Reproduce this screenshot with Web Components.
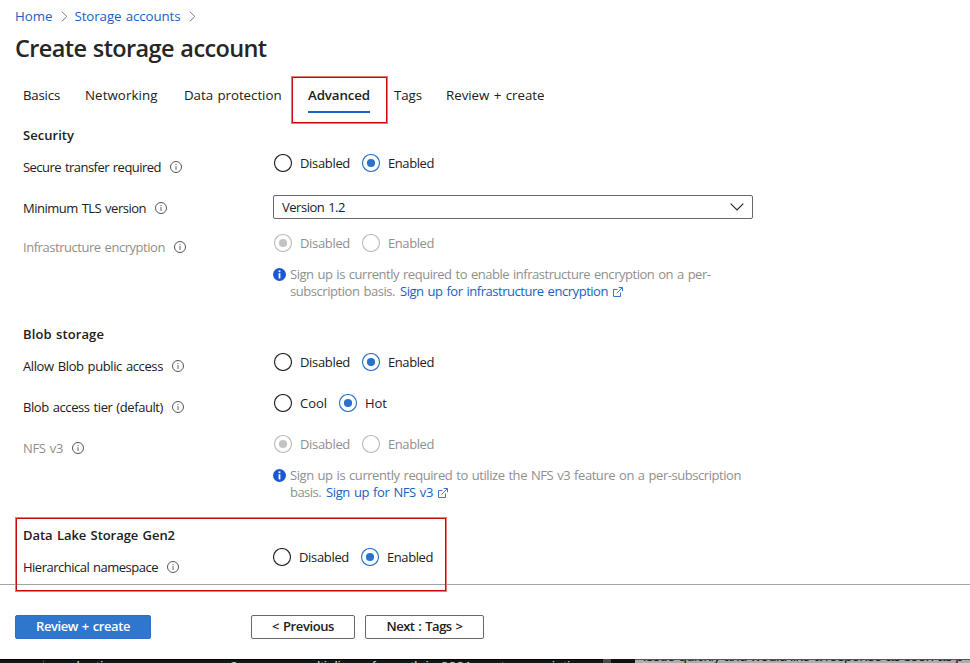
<!DOCTYPE html>
<html lang="en">
<head>
<meta charset="utf-8">
<title>Create storage account</title>
<style>
html,body{margin:0;padding:0;background:#fff;overflow:hidden}
body{width:970px;height:663px;font-family:"Open Sans","Noto Sans",sans-serif;font-size:13px;word-spacing:1px;color:#202020}
</style>
</head>
<body>
<storage-page></storage-page>
<script>
const define=(name,html,init)=>customElements.define(name,class extends HTMLElement{
  connectedCallback(){
    if(this.shadowRoot)return;
    const t=document.createElement('template');
    t.innerHTML=typeof html==='function'?html(this):html;
    this.attachShadow({mode:'open'}).append(t.content.cloneNode(true));
    if(init)init(this);
  }
});

/* A single line of text, tracked to occupy the width given in "w". */
define('fit-text','<style>:host{display:inline-block;white-space:pre;flex:none}span{display:inline-block}</style><span></span>',el=>{
  const s=el.shadowRoot.querySelector('span');
  s.textContent=el.getAttribute('t');
  const w=+el.getAttribute('w');
  const n=s.textContent.length;
  s.style.letterSpacing=((w-s.getBoundingClientRect().width)/n)+'px';
  el.style.width=w+'px';
});

define('info-icon',`<style>:host{display:block;width:12px;height:12px;flex:none}svg{display:block}</style>
<svg width="12" height="12" viewBox="0 0 12 12"><circle cx="6" cy="6" r="5.5" fill="none" stroke="#555" stroke-width="1"/><rect x="5.5" y="5" width="1" height="4" fill="#666"/><rect x="5.5" y="3" width="1" height="1.1" fill="#666"/></svg>`);

define('info-badge',`<style>:host{display:block;width:13px;height:13px;flex:none}svg{display:block}</style>
<svg width="13" height="13" viewBox="0 0 13 13"><circle cx="6.5" cy="6.5" r="6.5" fill="#1f57d2"/><rect x="5.6" y="5.2" width="1.8" height="5.2" fill="#fff"/><rect x="5.6" y="2.4" width="1.8" height="1.7" fill="#fff"/></svg>`);

define('external-icon',`<style>:host{display:block;width:10px;height:10px;flex:none}svg{display:block}</style>
<svg width="10" height="10" viewBox="0 0 10 10" fill="none" stroke="#3a78d0" stroke-width="1"><path d="M4.5 2.5H.5v7h7V5.5M5.7.5h3.8v3.8M9.5.5L3.7 6.3"/></svg>`);

define('crumb-chevron',`<style>:host{display:block;width:7px;height:11px;flex:none}svg{display:block}</style>
<svg width="7" height="11" viewBox="0 0 7 11"><path d="M.8.6L5.8 5.5.8 10.4" fill="none" stroke="#777" stroke-width="1"/></svg>`);

define('bread-crumbs',`<style>:host{display:flex;align-items:center;height:32px;padding-left:15px;box-sizing:border-box;color:#1562c5;line-height:18px;font-size:13.3px}
.a{margin:0 6.5px 0 8.5px}.b{margin-left:8px}</style>
<fit-text t="Home" w="37.5"></fit-text><crumb-chevron class="a"></crumb-chevron><fit-text t="Storage accounts" w="106"></fit-text><crumb-chevron class="b"></crumb-chevron>`);

define('tab-item',el=>`<style>:host{display:block;height:34px;line-height:32px;box-sizing:border-box}
:host([active]){font-weight:600;border-bottom:2px solid #1b62c4}</style><fit-text t="${el.getAttribute('t')}" w="${el.getAttribute('w')}"></fit-text>`);

define('tab-bar',`<style>:host{display:flex;height:60px;padding:13px 0 0 23px;box-sizing:border-box;align-items:flex-start;font-size:13.3px;position:relative}
.mark{position:absolute;left:291px;top:10px}</style>
<slot></slot><mark-box class="mark" style="width:97px;height:48px"></mark-box>`);

define('mark-box','<style>:host{display:block;box-sizing:border-box;border:1px solid #e27a7a;box-shadow:inset 0 0 0 1px #c60c0c;pointer-events:none}</style>');

define('section-title',el=>`<style>:host{display:block;height:18px;line-height:18px;padding-left:23px;font-weight:600}</style><fit-text t="${el.getAttribute('t')}" w="${el.getAttribute('w')}"></fit-text>`);

define('form-row',el=>`<style>:host{display:grid;grid-template-columns:250px 1fr;padding-left:23px;box-sizing:border-box;line-height:18px}
.l{display:flex;gap:9px;padding-top:14px;align-items:center;height:18px}
.l fit-text{color:${el.hasAttribute('dim')?'#8f8f8d':'#202020'}}
.c{padding-top:10px}:host([raised]) .c{padding-top:4px;margin-left:-1px}</style>
<div class="l"><fit-text t="${el.getAttribute('t')}" w="${el.getAttribute('w')}"></fit-text><info-icon></info-icon></div><div class="c"><slot></slot></div>`);

define('radio-option',el=>`<style>:host{display:flex;align-items:center;gap:8px;height:18px;color:#202020}
:host([off]){color:#8f8f8d}svg{display:block;flex:none}
circle{fill:none;stroke:#222}.d{display:none;stroke:none}
:host([on]) circle{stroke:#2a72cb}:host([on]) .d{display:block;fill:#2a72cb;stroke:none}
:host([off]) circle{stroke:#bdbdbb}:host([off][on]) .d{fill:#c3c3c1;stroke:none}</style>
<svg width="18" height="18" viewBox="0 0 18 18"><circle cx="9" cy="9" r="8.5" stroke-width="1.1"/><circle class="d" cx="9" cy="9" r="4.1"/></svg><fit-text t="${el.getAttribute('t')}" w="${el.getAttribute('w')}"></fit-text>`);

define('radio-group','<style>:host{display:flex;gap:12px;padding-left:1px}</style><slot></slot>');

define('select-box',`<style>:host{display:flex;width:480px;height:24px;box-sizing:border-box;border:1px solid #6a6866;border-radius:2px;align-items:center;justify-content:space-between;padding:0 8px}svg{display:block}</style>
<fit-text t="Version 1.2" w="63"></fit-text><svg width="14" height="8" viewBox="0 0 14 8"><path d="M.7.7L7 7 13.3.7" fill="none" stroke="#222" stroke-width="1.1"/></svg>`);

define('sign-up-note',`<style>:host{display:flex;gap:4px;padding-top:14px;color:#8f8f8d;line-height:17px}
info-badge{margin-top:2px}::slotted(div){display:flex;align-items:center;height:17px}</style>
<info-badge></info-badge><div><slot></slot></div>`);

define('note-link',el=>`<style>:host{display:flex;align-items:center;gap:5px;margin-left:5px;color:#1562c5}</style><fit-text t="${el.getAttribute('t')}" w="${el.getAttribute('w')}"></fit-text><external-icon></external-icon>`);

define('push-button',el=>`<style>:host{display:flex;align-items:center;justify-content:center;height:24px;box-sizing:border-box;border:1px solid #6a6866;border-radius:2px;font-weight:600;line-height:18px;padding-bottom:2px}
:host([primary]){background:#2e76ce;border-color:#2a70c8;color:#fff}</style><fit-text t="${el.getAttribute('t')}" w="${el.getAttribute('w')}"></fit-text>`);

define('action-bar','<style>:host{display:flex;height:75px;box-sizing:border-box;border-top:1px solid #a3a3a3;padding:30px 0 0 15px}</style><slot></slot>');

/* Sliver of the windows behind the form, cut off by the bottom edge. */
define('backdrop-strip',`<style>:host{display:flex;height:4px;overflow:hidden;font-family:"Liberation Sans",sans-serif;font-size:15px;line-height:18px;word-spacing:0;background:#161617}
.dark{width:603px;height:4px;box-sizing:border-box;border-top:1px solid #000;overflow:hidden;color:#c8c8c8;display:flex}
.rule{width:44px;border-right:1px solid #444;box-sizing:border-box;height:3px;margin-right:14px}
.dark fit-text{margin-top:-2px;height:18px}
.bar{width:8px;background:#4c4a4c}.gap{width:24px;background:#111}
.light{width:335px;background:#aeaaad;color:#1c1c1e;overflow:hidden;border-top:1px solid #555;height:4px;box-sizing:border-box;display:flex}
.light fit-text{margin:-13px 0 0 8px;height:18px}</style>
<div class="dark"><div class="rule"></div><fit-text t="reduction" w="62"></fit-text><fit-text t="are now" w="60" style="margin-left:22px"></fit-text><fit-text t="9" w="9" style="margin-left:28px"></fit-text><fit-text t="our" w="22" style="margin-left:16px"></fit-text><fit-text t="multipliers of growth in 2021" w="175" style="margin-left:20px"></fit-text><fit-text t="not conscriptions" w="110" style="margin-left:12px"></fit-text></div>
<div class="bar"></div><div class="gap"></div><div class="light"><fit-text t="issue quickly and would like a response as soon as p" w="320"></fit-text></div>`);

define('storage-page',`<style>
:host{display:flex;flex-direction:column;width:970px;height:663px;position:relative;overflow:hidden}
h1{margin:0;height:34px;line-height:32px;padding-left:15px;font-size:23.5px;font-weight:600;color:#262626}
.lake{position:absolute;left:15px;top:517px;width:432px;height:75px}
</style>
<bread-crumbs></bread-crumbs>
<h1><fit-text t="Create storage account" w="251.5"></fit-text></h1>
<tab-bar>
<tab-item t="Basics" w="37"></tab-item>
<tab-item t="Networking" w="72.5" style="margin-left:25px"></tab-item>
<tab-item t="Data protection" w="97.5" style="margin-left:26.5px"></tab-item>
<tab-item active t="Advanced" w="62" style="margin-left:26.5px"></tab-item>
<tab-item t="Tags" w="28" style="margin-left:24px"></tab-item>
<tab-item t="Review + create" w="98.5" style="margin-left:24px"></tab-item>
</tab-bar>
<section-title t="Security" w="51"></section-title>
<form-row t="Secure transfer required" w="138" style="height:41px"><radio-group><radio-option t="Disabled" w="50"></radio-option><radio-option on t="Enabled" w="46"></radio-option></radio-group></form-row>
<form-row t="Minimum TLS version" w="123" style="height:39px"><select-box></select-box></form-row>
<form-row dim t="Infrastructure encryption" w="142" style="height:101px"><radio-group><radio-option off on t="Disabled" w="50"></radio-option><radio-option off t="Enabled" w="46"></radio-option></radio-group>
<sign-up-note><div><fit-text t="Sign up is currently required to enable infrastructure encryption on a per-" w="420.5"></fit-text></div><div><fit-text t="subscription basis." w="105"></fit-text><note-link t="Sign up for infrastructure encryption" w="208"></note-link></div></sign-up-note></form-row>
<section-title t="Blob storage" w="81"></section-title>
<form-row t="Allow Blob public access" w="140" style="height:41px"><radio-group><radio-option t="Disabled" w="50"></radio-option><radio-option on t="Enabled" w="46"></radio-option></radio-group></form-row>
<form-row t="Blob access tier (default)" w="140" style="height:41px"><radio-group><radio-option t="Cool" w="27"></radio-option><radio-option on t="Hot" w="22"></radio-option></radio-group></form-row>
<form-row dim t="NFS v3" w="40" style="height:101px"><radio-group><radio-option off on t="Disabled" w="50"></radio-option><radio-option off t="Enabled" w="46"></radio-option></radio-group>
<sign-up-note><div><fit-text t="Sign up is currently required to utilize the NFS v3 feature on a per-subscription" w="451"></fit-text></div><div><fit-text t="basis." w="31"></fit-text><note-link t="Sign up for NFS v3" w="107"></note-link></div></sign-up-note></form-row>
<section-title t="Data Lake Storage Gen2" w="152"></section-title>
<form-row raised t="Hierarchical namespace" w="135" style="height:40px"><radio-group><radio-option t="Disabled" w="50"></radio-option><radio-option on t="Enabled" w="46"></radio-option></radio-group></form-row>
<action-bar><push-button primary t="Review + create" w="94" style="width:136px"></push-button><push-button t="&lt; Previous" w="62" style="width:104px;margin-left:100px"></push-button><push-button t="Next : Tags &gt;" w="76" style="width:119px;margin-left:10px"></push-button></action-bar>
<backdrop-strip></backdrop-strip>
<mark-box class="lake"></mark-box>`);
</script>
</body>
</html>
